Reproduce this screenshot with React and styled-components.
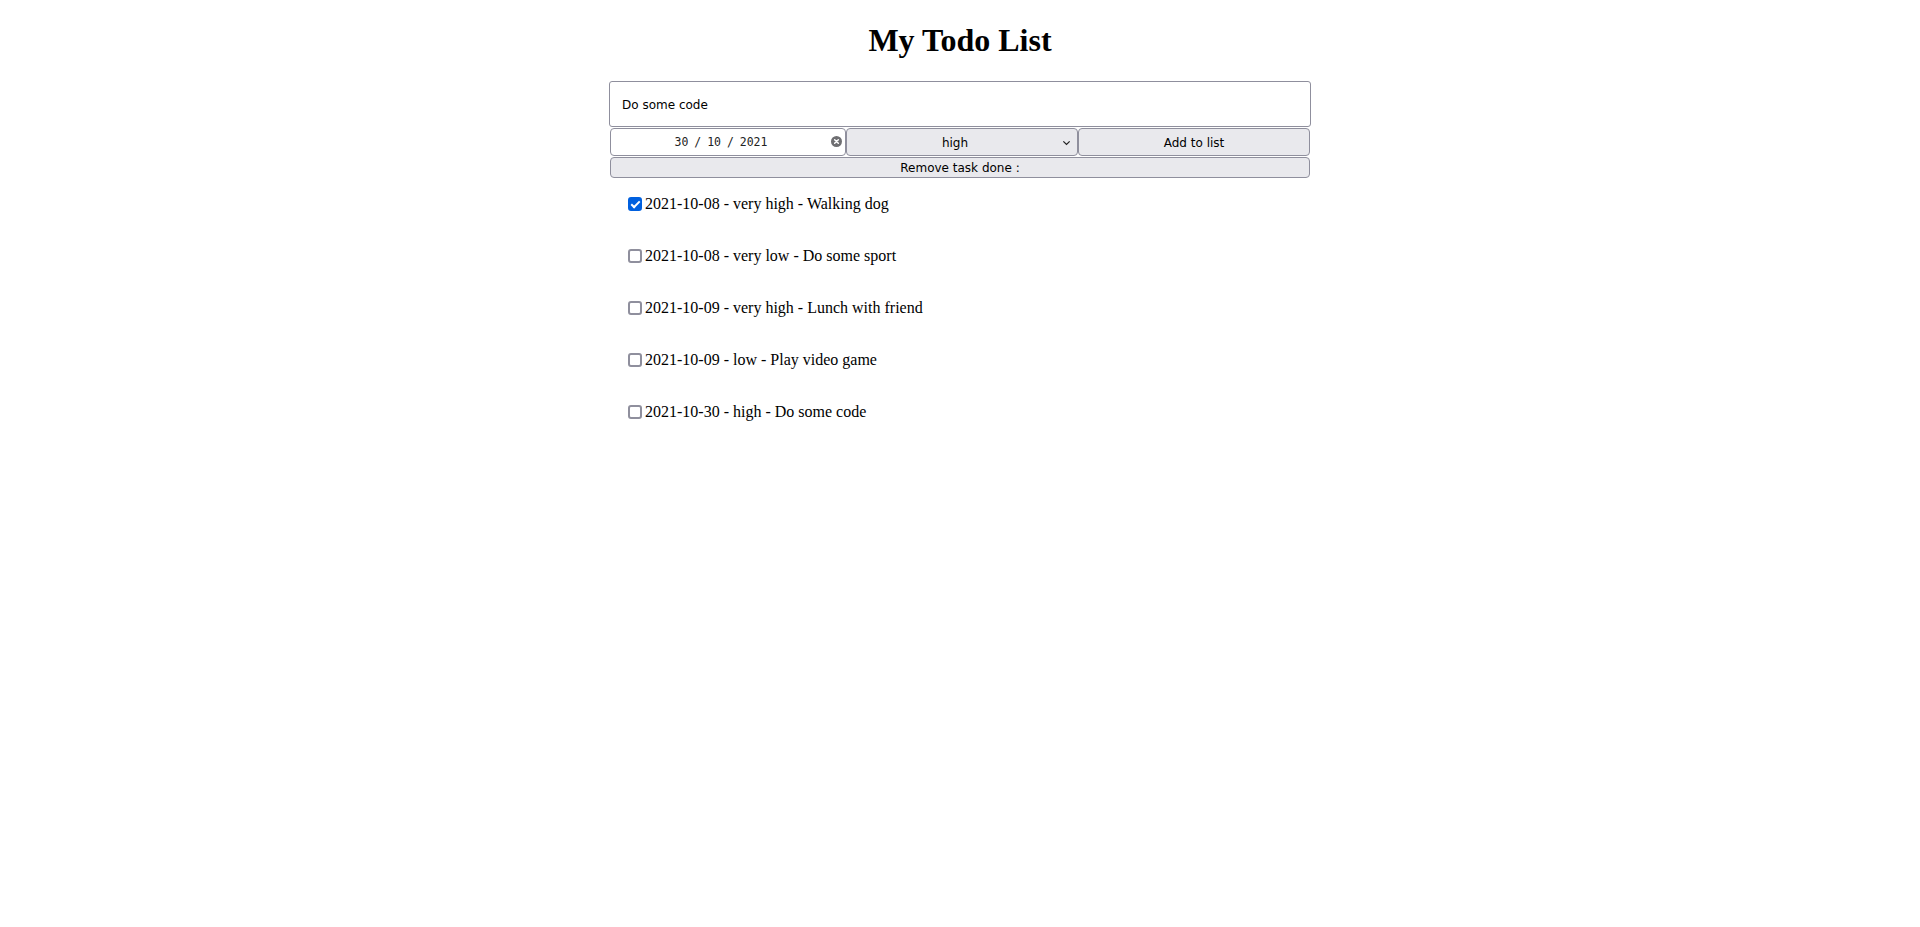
import styled, { createGlobalStyle } from 'styled-components'
import { useState } from 'react'

const GlobalStyle = createGlobalStyle`
  body {
    margin: 0;
    background: #ffffff;
    font-family: "Liberation Serif", "Times New Roman", serif;
    color: #000000;
  }
`

const initialTasks = [
  { id: 1, date: '2021-10-08', priority: 'very high', name: 'Walking dog', done: true },
  { id: 2, date: '2021-10-08', priority: 'very low', name: 'Do some sport', done: false },
  { id: 3, date: '2021-10-09', priority: 'very high', name: 'Lunch with friend', done: false },
  { id: 4, date: '2021-10-09', priority: 'low', name: 'Play video game', done: false },
  { id: 5, date: '2021-10-30', priority: 'high', name: 'Do some code', done: false },
]

export default function App() {
  const [tasks, setTasks] = useState(initialTasks)
  const [text, setText] = useState('Do some code')
  const [priority, setPriority] = useState('high')

  const toggle = (id) =>
    setTasks(tasks.map((t) => (t.id === id ? { ...t, done: !t.done } : t)))

  return (
    <Main>
      <GlobalStyle />
      <Title>My Todo List</Title>
      <Form>
        <TextInput value={text} onChange={(e) => setText(e.target.value)} />
        <Row>
          <DateField>
            <DateText>30 / 10 / 2021</DateText>
            <ClearIcon viewBox="0 0 12 12">
              <circle cx="6" cy="6" r="6" fill="#6f6f72" />
              <path d="M4 4 L8 8 M8 4 L4 8" stroke="#ffffff" strokeWidth="1.6" strokeLinecap="round" />
            </ClearIcon>
          </DateField>
          <SelectBox>
            <SelectText>{priority}</SelectText>
            <Chevron viewBox="0 0 10 6">
              <path d="M1.5 1.2 L5 4.6 L8.5 1.2" fill="none" stroke="#222" strokeWidth="1.4" />
            </Chevron>
            <HiddenSelect value={priority} onChange={(e) => setPriority(e.target.value)}>
              <option>very low</option>
              <option>low</option>
              <option>high</option>
              <option>very high</option>
            </HiddenSelect>
          </SelectBox>
          <Button>Add to list</Button>
        </Row>
        <WideButton>Remove task done :</WideButton>
      </Form>
      <List>
        {tasks.map((t) => (
          <Item key={t.id}>
            <Check type="checkbox" checked={t.done} onChange={() => toggle(t.id)} />
            <span>{t.date} - {t.priority} - {t.name}</span>
          </Item>
        ))}
      </List>
    </Main>
  )
}

const Main = styled.main`
  width: 700px;
  margin: 0 auto;
`

const Title = styled.h1`
  font-size: 32px;
  font-weight: bold;
  text-align: center;
  margin: 22px 0 22px;
  line-height: 37px;
`

const Form = styled.div`
  display: flex;
  flex-direction: column;
`

const TextInput = styled.input`
  box-sizing: border-box;
  width: calc(100% + 2px);
  margin: 0 -1px 1px;
  height: 46px;
  padding: 2px 12px 0;
  border: 1px solid #8f8f9d;
  border-radius: 3px;
  font-family: "DejaVu Sans", sans-serif;
  font-size: 12px;
  color: #000;
  outline: none;
`

const Row = styled.div`
  display: grid;
  grid-template-columns: 236px 1fr 1fr;
  height: 28px;
`

const control = `
  box-sizing: border-box;
  border: 1px solid #8f8f9d;
  border-radius: 4px;
  font-family: "DejaVu Sans", sans-serif;
  font-size: 12px;
  color: #000;
`

const DateField = styled.div`
  ${control}
  background: #ffffff;
  display: flex;
  align-items: center;
  justify-content: center;
  position: relative;
`

const DateText = styled.span`
  font-family: "DejaVu Sans Mono", monospace;
  font-size: 11.5px;
  color: #222;
  margin-left: -14px;
  word-spacing: -1px;
`

const ClearIcon = styled.svg`
  position: absolute;
  right: 3px;
  top: 7px;
  width: 11px;
  height: 11px;
`

const SelectBox = styled.div`
  ${control}
  background: #e9e9ed;
  display: flex;
  align-items: center;
  justify-content: center;
  padding-top: 2px;
  position: relative;
`

const SelectText = styled.span`
  margin-left: -14px;
`

const Chevron = styled.svg`
  position: absolute;
  right: 6px;
  top: 11px;
  width: 9px;
  height: 6px;
`

const HiddenSelect = styled.select`
  position: absolute;
  inset: 0;
  opacity: 0;
  cursor: pointer;
`

const Button = styled.button`
  ${control}
  background: #e9e9ed;
  padding: 2px 0 0;
  cursor: pointer;
`

const WideButton = styled.button`
  ${control}
  background: #e9e9ed;
  height: 21px;
  margin-top: 1px;
  padding: 1px 0 0;
  cursor: pointer;
`

const List = styled.div`
  padding: 0 0 0 18px;
`

const Item = styled.div`
  display: flex;
  align-items: center;
  height: 20px;
  padding: 16px 0;
  font-size: 16px;
  line-height: 20px;
`

const Check = styled.input`
  appearance: none;
  box-sizing: border-box;
  width: 14px;
  height: 14px;
  margin: 0 3px 0 0;
  border: 2px solid #8f8f9d;
  border-radius: 3px;
  background: #fff;
  position: relative;
  cursor: pointer;
  &:checked {
    background: #0060df;
    border-color: #0060df;
  }
  &:checked::after {
    content: '';
    position: absolute;
    left: 3px;
    top: 0px;
    width: 3px;
    height: 7px;
    border: solid #fff;
    border-width: 0 2px 2px 0;
    transform: rotate(45deg);
  }
`
